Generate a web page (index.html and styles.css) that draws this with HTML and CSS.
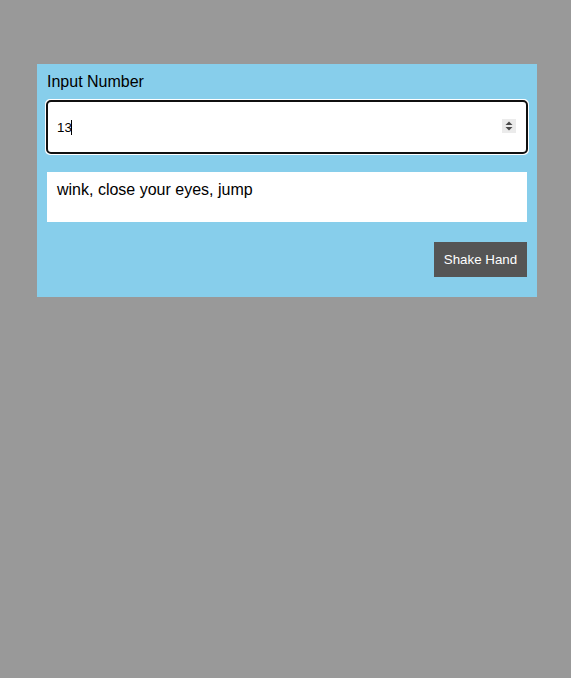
FILE: index.html
```html
<!DOCTYPE html>
<html>
<head>
<meta charset="utf-8">
<link rel="stylesheet" href="styles.css">
</head>
<body>
<div class="panel">
  <label class="label" for="num">Input Number</label>
  <div class="field">
    <input id="num" class="num" type="number" value="13" autofocus>
    <span class="caret"></span>
    <span class="spin">
      <svg width="14" height="14" viewBox="0 0 14 14"><path d="M7 2.5 L10.5 6 L3.5 6 Z" fill="#4a4a4a"/><path d="M3.5 8 L10.5 8 L7 11.5 Z" fill="#4a4a4a"/></svg>
    </span>
  </div>
  <div class="output">wink, close your eyes, jump</div>
  <div class="actions">
    <button class="btn">Shake Hand</button>
  </div>
</div>
</body>
</html>
```
FILE: styles.css
```css
html, body {
  margin: 0;
  padding: 0;
  background: #999999;
  font-family: "Liberation Sans", Arial, sans-serif;
}
body {
  padding: 64px 34px 0 37px;
  min-height: 678px;
  box-sizing: border-box;
}
.panel {
  width: 500px;
  box-sizing: border-box;
  background: #87ceeb;
  padding: 9px 10px 20px;
  display: flex;
  flex-direction: column;
}
.label {
  font-size: 16px;
  line-height: 18px;
  color: #000;
  margin-bottom: 10px;
}
.field {
  position: relative;
  width: 480px;
  height: 52px;
}
.num {
  display: block;
  width: 480px;
  height: 52px;
  box-sizing: border-box;
  border: none;
  border-radius: 4px;
  padding: 0 10px;
  font-family: "Liberation Sans", Arial, sans-serif;
  font-size: 13.33px;
  color: #000;
  background: #fff;
  margin: 0;
  caret-color: transparent;
  -moz-appearance: textfield;
  appearance: textfield;
}
.num::-webkit-inner-spin-button,
.num::-webkit-outer-spin-button {
  -webkit-appearance: none;
  margin: 0;
}
.caret {
  position: absolute;
  left: 24px;
  top: 19px;
  width: 1px;
  height: 15px;
  background: #000;
}
.spin {
  position: absolute;
  right: 11px;
  top: 18px;
  width: 14px;
  height: 14px;
  background: #ebebeb;
  display: flex;
}
.output {
  margin-top: 19px;
  height: 50px;
  box-sizing: border-box;
  background: #fff;
  padding: 9px 10px;
  font-size: 16px;
  line-height: 18px;
  color: #000;
}
.actions {
  margin-top: 20px;
  display: flex;
  justify-content: flex-end;
}
.btn {
  height: 35px;
  width: 93px;
  border: none;
  border-radius: 0;
  background: #555555;
  color: #fff;
  font-family: "Liberation Sans", Arial, sans-serif;
  font-size: 13.33px;
  padding: 0;
}
```
